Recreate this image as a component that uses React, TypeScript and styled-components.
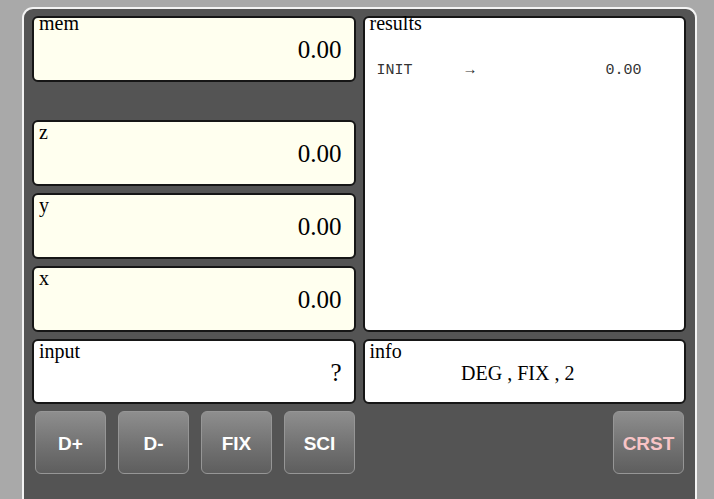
import React from "react";
import styled, { createGlobalStyle } from "styled-components";

const Global = createGlobalStyle`
  html, body {
    margin: 0;
    padding: 0;
    background: #a9a9a9;
    overflow: hidden;
  }
  body {
    font-family: "Liberation Serif", "Times New Roman", serif;
  }
`;

const Panel = styled.div`
  box-sizing: border-box;
  margin: 7px 0 0 22px;
  width: 675px;
  height: 492px;
  background: #545454;
  border: 2px solid #f4f4f4;
  border-bottom: none;
  border-radius: 11px 11px 0 0;
  padding: 7px 9px 0 8px;
`;

const Grid = styled.div`
  display: grid;
  grid-template-columns: 1fr 1fr;
  column-gap: 7px;
  row-gap: 7px;
`;

const Stack = styled.div`
  display: flex;
  flex-direction: column;
  gap: 7px;
`;

const Spacer = styled.div`
  height: 24px;
`;

const Box = styled.div<{ $tone: "cream" | "white"; $h?: number }>`
  box-sizing: border-box;
  height: ${(p) => (p.$h ? `${p.$h}px` : "auto")};
  background: ${(p) => (p.$tone === "cream" ? "#ffffef" : "#ffffff")};
  border: 2px solid #161616;
  border-radius: 6px;
  padding: 0 12px 0 5px;
  color: #000;
`;

const Label = styled.div<{ $raised?: boolean }>`
  font-size: 20px;
  line-height: 20px;
  margin-top: ${(p) => (p.$raised ? "-5px" : "0")};
  margin-bottom: ${(p) => (p.$raised ? "5px" : "0")};
`;

const Value = styled.div`
  font-size: 25px;
  line-height: 23px;
  text-align: right;
`;

const InfoText = styled.div`
  font-size: 20px;
  line-height: 20px;
  margin: 2px 6px 0 0;
  text-align: center;
`;

const ResultList = styled.div`
  padding: 24px 0 0 7px;
  font-family: "Liberation Mono", "Courier New", monospace;
  font-size: 15px;
  line-height: 18px;
  color: #333;
`;

const ResultRow = styled.div`
  display: grid;
  grid-template-columns: 89px 140px auto;
`;

const ButtonRow = styled.div`
  display: flex;
  gap: 12px;
  margin-top: 7px;
  padding: 0 2px 0 3px;
`;

const Key = styled.button<{ $accent?: boolean; $push?: boolean }>`
  box-sizing: border-box;
  width: 71px;
  height: 63px;
  margin-left: ${(p) => (p.$push ? "auto" : "0")};
  border: 1px solid #969696;
  border-radius: 6px;
  background: linear-gradient(to bottom, #8e8e8e 0%, #727272 55%, #5e5e5e 100%);
  color: ${(p) => (p.$accent ? "#f8c4c6" : "#ffffff")};
  font-family: "Liberation Sans", Arial, sans-serif;
  font-weight: bold;
  font-size: 19px;
  padding: 2px 0 0;
  cursor: pointer;
`;

function Register({ label, value, raised }: { label: string; value: string; raised?: boolean }) {
  return (
    <Box $tone="cream" $h={66}>
      <Label $raised={raised}>{label}</Label>
      <Value>{value}</Value>
    </Box>
  );
}

export default function App() {
  return (
    <>
      <Global />
      <Panel>
        <Grid>
          <Stack>
            <Register label="mem" value="0.00" raised />
            <Spacer />
            <Register label="z" value="0.00" />
            <Register label="y" value="0.00" />
            <Register label="x" value="0.00" />
          </Stack>
          <Box $tone="white">
            <Label $raised>results</Label>
            <ResultList>
              <ResultRow>
                <span>INIT</span>
                <span>→</span>
                <span>0.00</span>
              </ResultRow>
            </ResultList>
          </Box>
          <Box $tone="white" $h={65}>
            <Label>input</Label>
            <Value>?</Value>
          </Box>
          <Box $tone="white" $h={65}>
            <Label>info</Label>
            <InfoText>DEG , FIX , 2</InfoText>
          </Box>
        </Grid>
        <ButtonRow>
          <Key>D+</Key>
          <Key>D-</Key>
          <Key>FIX</Key>
          <Key>SCI</Key>
          <Key $accent $push>CRST</Key>
        </ButtonRow>
      </Panel>
    </>
  );
}
